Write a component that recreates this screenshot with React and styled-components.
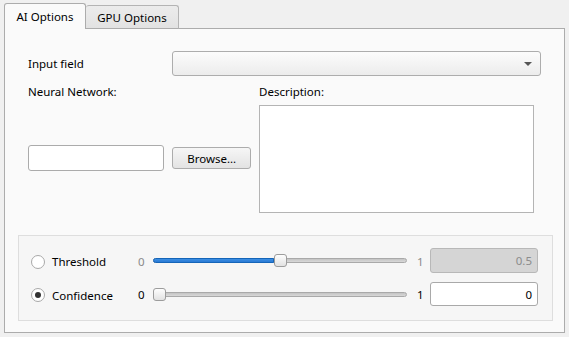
import React from 'react';
import styled, { createGlobalStyle } from 'styled-components';

const GlobalStyle = createGlobalStyle`
  html, body {
    margin: 0;
    padding: 0;
    background: #f0f0f0;
  }
  body {
    font-family: "Noto Sans", "Open Sans", sans-serif;
    font-size: 11.5px;
    color: #000;
  }
`;

const Window = styled.div`
  width: 569px;
  height: 337px;
  box-sizing: border-box;
  padding: 3px 4px 0 4px;
  display: flex;
  flex-direction: column;
`;

const TabBar = styled.div`
  display: flex;
  align-items: flex-end;
  height: 26px;
  position: relative;
  z-index: 1;
  margin-bottom: -1px;
`;

const Tab = styled.div`
  box-sizing: border-box;
  flex: none;
  white-space: nowrap;
  width: ${(p) => p.$w}px;
  height: ${(p) => (p.$active ? '26px' : '24px')};
  display: flex;
  align-items: center;
  justify-content: center;
  border: 1px solid ${(p) => (p.$active ? '#acacac' : '#b4b4b4')};
  border-bottom: ${(p) => (p.$active ? 'none' : '1px solid #acacac')};
  border-left: ${(p) => (p.$active ? '1px solid #acacac' : 'none')};
  border-radius: 3px 3px 0 0;
  padding-bottom: ${(p) => (p.$active ? '1px' : '0')};
  background: ${(p) =>
    p.$active ? '#fafafa' : 'linear-gradient(#ececec, #e2e2e2)'};
`;

const Panel = styled.div`
  box-sizing: border-box;
  width: 561px;
  height: 305px;
  border: 1px solid #acacac;
  background: #fafafa;
  padding: 22px 23px 11px 13px;
  display: flex;
  flex-direction: column;
`;

const Top = styled.div`
  padding-left: 10px;
  display: flex;
  flex-direction: column;
`;

const Row = styled.div`
  display: flex;
  align-items: center;
`;

const RowLabel = styled.div`
  width: 144px;
`;

const Combo = styled.div`
  flex: 1;
  box-sizing: border-box;
  height: 25px;
  border: 1px solid #adadad;
  border-radius: 3px;
  background: linear-gradient(#fcfcfc, #ececec);
  display: flex;
  justify-content: flex-end;
  align-items: center;
  padding-right: 8px;
`;

const Arrow = styled.div`
  width: 0;
  height: 0;
  border-left: 4px solid transparent;
  border-right: 4px solid transparent;
  border-top: 4px solid #555;
`;

const Columns = styled.div`
  display: flex;
  gap: 8px;
  margin-top: 7px;
`;

const LeftCol = styled.div`
  width: 223px;
  display: flex;
  flex-direction: column;
`;

const RightCol = styled.div`
  width: 275px;
  display: flex;
  flex-direction: column;
`;

const Label = styled.div`
  height: 17px;
  line-height: 17px;
`;

const BrowseRow = styled.div`
  display: flex;
  align-items: center;
  gap: 8px;
  margin-top: 45px;
`;

const TextInput = styled.div`
  box-sizing: border-box;
  width: 137px;
  height: 26px;
  background: #fff;
  border: 1px solid #ababab;
  border-radius: 3px;
`;

const Button = styled.div`
  box-sizing: border-box;
  width: 79px;
  height: 22px;
  border: 1px solid #acacac;
  border-radius: 3px;
  background: linear-gradient(#f6f6f6, #e3e3e3);
  display: flex;
  align-items: center;
  justify-content: center;
`;

const TextArea = styled.div`
  box-sizing: border-box;
  margin-top: 5px;
  width: 275px;
  height: 108px;
  background: #fff;
  border: 1px solid #b4b4b4;
`;

const Group = styled.div`
  margin-top: auto;
  margin-right: -12px;
  box-sizing: border-box;
  height: 86px;
  border: 1px solid #dedede;
  background: #f6f6f6;
  padding: 12px 14px 0 12px;
  display: grid;
  grid-template-columns: 107px 15px 264px 13px 108px;
  grid-template-rows: 25px 24px;
  row-gap: 9px;
  align-items: center;
`;

const Radio = styled.div`
  display: flex;
  align-items: center;
  gap: 7px;
  padding-top: 2px;
`;

const Circle = styled.div`
  box-sizing: border-box;
  width: 14px;
  height: 14px;
  border-radius: 50%;
  border: 1px solid #a9a9a9;
  background: #fff;
  display: flex;
  align-items: center;
  justify-content: center;
  &::after {
    content: '';
    display: ${(p) => (p.$checked ? 'block' : 'none')};
    width: 6px;
    height: 6px;
    border-radius: 50%;
    background: #333;
  }
`;

const Tick = styled.div`
  padding-top: 1px;
  color: ${(p) => (p.$disabled ? '#8a8a8a' : '#000')};
`;

const Slider = styled.div`
  width: 254px;
  height: 14px;
  display: flex;
  align-items: center;
`;

const Track = styled.div`
  flex: 1;
  box-sizing: border-box;
  height: 5px;
  border-radius: 3px;
  border: 1px solid #a9a9a9;
  background: linear-gradient(#c4c4c4, #d8d8d8);
  display: flex;
  align-items: center;
  overflow: visible;
`;

const Fill = styled.div`
  box-sizing: border-box;
  height: 5px;
  margin: -1px 0 0 -1px;
  border-radius: 3px 0 0 3px;
  border: 1px solid #1565b8;
  background: linear-gradient(#3a8ee3, #2a7ad4);
`;

const Handle = styled.div`
  box-sizing: border-box;
  width: 13px;
  height: 13px;
  flex: none;
  margin: 0 -1px;
  border: 1px solid #9c9c9c;
  border-radius: 3px;
  background: linear-gradient(#fdfdfd, #e2e2e2);
  position: relative;
  z-index: 1;
`;

const Spin = styled.div`
  box-sizing: border-box;
  width: 108px;
  height: ${(p) => (p.$disabled ? '25px' : '24px')};
  border: 1px solid ${(p) => (p.$disabled ? '#b8b8b8' : '#a9a9a9')};
  border-radius: 3px;
  background: ${(p) => (p.$disabled ? '#d5d5d5' : '#fff')};
  color: ${(p) => (p.$disabled ? '#8c8c8c' : '#000')};
  display: flex;
  align-items: center;
  justify-content: flex-end;
  padding-right: 5px;
`;

const SliderRow = ({ label, checked, disabled, value, text }) => (
  <>
    <Radio>
      <Circle $checked={checked} />
      <span>{label}</span>
    </Radio>
    <Tick $disabled={disabled}>0</Tick>
    <Slider>
      <Track>
        {value > 0 && <Fill style={{ width: `${value * 242}px` }} />}
        <Handle style={{ marginLeft: value > 0 ? 0 : -1 }} />
      </Track>
    </Slider>
    <Tick $disabled={disabled}>1</Tick>
    <Spin $disabled={disabled}>{text}</Spin>
  </>
);

export default function App() {
  return (
    <>
      <GlobalStyle />
      <Window>
        <TabBar>
          <Tab $active $w={82}>AI Options</Tab>
          <Tab $w={93}>GPU Options</Tab>
        </TabBar>
        <Panel>
          <Top>
            <Row>
              <RowLabel>Input field</RowLabel>
              <Combo>
                <Arrow />
              </Combo>
            </Row>
            <Columns>
              <LeftCol>
                <Label>Neural Network:</Label>
                <BrowseRow>
                  <TextInput />
                  <Button>Browse...</Button>
                </BrowseRow>
              </LeftCol>
              <RightCol>
                <Label>Description:</Label>
                <TextArea />
              </RightCol>
            </Columns>
          </Top>
          <Group>
            <SliderRow label="Threshold" disabled value={0.5} text="0.5" />
            <SliderRow label="Confidence" checked value={0} text="0" />
          </Group>
        </Panel>
      </Window>
    </>
  );
}
